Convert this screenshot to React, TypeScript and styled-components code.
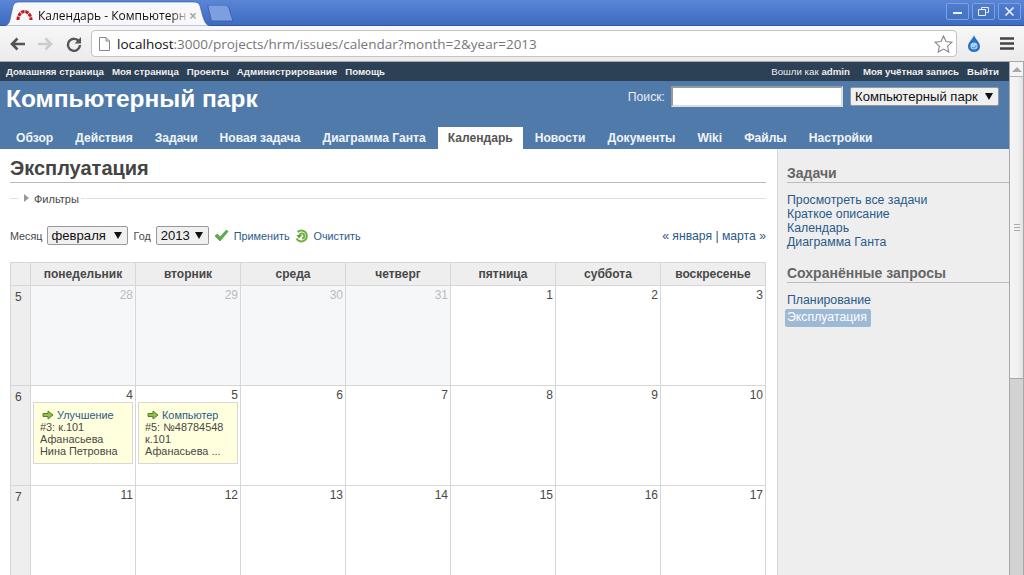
import React from 'react'
import styled, { createGlobalStyle } from 'styled-components'

const GlobalStyle = createGlobalStyle`
  html, body {
    margin: 0;
    padding: 0;
    height: 575px;
    overflow: hidden;
    background: #fff;
    font-family: "Liberation Sans", Arial, sans-serif;
  }
  * { box-sizing: border-box; }
`

const Page = styled.div`
  width: 1024px;
  height: 575px;
  display: flex;
  flex-direction: column;
  overflow: hidden;
`

/* browser chrome */
const TabStrip = styled.div`
  height: 26px;
  flex: none;
  display: flex;
  align-items: flex-end;
  justify-content: space-between;
  padding-left: 3px;
  background: linear-gradient(#5a86d6, #3d6bc0);
  border-bottom: 1px solid #2f559f;
`
const TabGroup = styled.div`
  display: flex;
  align-items: flex-end;
`
const ActiveTab = styled.div`
  position: relative;
  width: 208px;
  height: 25px;
  margin-bottom: -1px;
  display: flex;
  align-items: center;
  padding: 3px 0 0 13px;
  font: 12px "Open Sans", "Noto Sans", sans-serif;
  color: #111;
  > svg.shape {
    position: absolute;
    left: 0;
    top: 0;
  }
  > * { position: relative; }
`
const TabTitle = styled.span`
  margin-left: 5px;
  width: 148px;
  white-space: nowrap;
  -webkit-mask-image: linear-gradient(90deg, #000 90%, rgba(0, 0, 0, 0.25));
  mask-image: linear-gradient(90deg, #000 90%, rgba(0, 0, 0, 0.25));
`
const TabClose = styled.span`
  margin-left: 3px;
  color: #aaa;
  font-size: 14px;
  font-weight: bold;
`
const NewTab = styled.svg`
  margin: 0 0 3px -4px;
  display: block;
`
const WindowButtons = styled.div`
  display: flex;
  gap: 3px;
  align-self: flex-start;
  margin: 3px 3px 0 0;
`
const WindowButton = styled.div`
  width: 23px;
  height: 17px;
  border: 1px solid #7fa0dd;
  border-radius: 2px;
  background: linear-gradient(#4f7ccc, #4472c4);
  display: flex;
  align-items: center;
  justify-content: center;
`
const Toolbar = styled.div`
  height: 36px;
  flex: none;
  display: flex;
  align-items: center;
  padding-left: 10px;
  background: linear-gradient(#f7f7f7, #ebebeb);
  border-bottom: 1px solid #a8a8a8;
`
const NavIcon = styled.svg<{ $gap: number }>`
  display: block;
  flex: none;
  margin-right: ${p => p.$gap}px;
`
const Omnibox = styled.div`
  width: 866px;
  height: 27px;
  background: #fff;
  border: 1px solid #c4c4c4;
  border-radius: 4px;
  display: flex;
  align-items: center;
  padding: 0 3px 0 7px;
  font: 13.500px "Open Sans", "Noto Sans", sans-serif;
`
const UrlHost = styled.span`
  color: #111;
  margin-left: 7px;
`
const UrlRest = styled.span`
  color: #777;
  flex: 1;
`
const ToolbarIcons = styled.div`
  display: flex;
  align-items: center;
  margin-left: 11px;
  gap: 20px;
`

/* redmine header */
const TopMenu = styled.div`
  height: 19px;
  flex: none;
  background: #2c4056;
  display: flex;
  justify-content: space-between;
  align-items: center;
  padding: 0 10px 0 6px;
  font-size: 9.700px;
  font-weight: bold;
  color: #eee;
`
const TopGroup = styled.div`
  display: flex;
  gap: 8px;
`
const LoggedAs = styled.span`
  font-weight: normal;
  margin-right: 5px;
  b { font-weight: bold; }
`
const Body = styled.div`
  flex: 1;
  display: flex;
  min-height: 0;
`
const Viewport = styled.div`
  width: 1009px;
  display: flex;
  flex-direction: column;
  flex: none;
`
const Scrollbar = styled.div`
  width: 15px;
  flex: none;
  background: #d2d2d2;
  border-left: 1px solid #a8a8a8;
  border-right: 1px solid #a8a8a8;
  display: flex;
  flex-direction: column;
`
const ScrollArrow = styled.div`
  height: 15px;
  background: #f4f4f4;
  border-bottom: 1px solid #b4b4b4;
  display: flex;
  align-items: center;
  justify-content: center;
  &::before {
    content: '';
    border-left: 5px solid transparent;
    border-right: 5px solid transparent;
    border-bottom: 5px solid #aaa;
  }
`
const ScrollThumb = styled.div`
  width: 100%;
  height: 302px;
  background: linear-gradient(90deg, #f5f5f5, #f0f0f0 60%, #e2e2e2);
  border-bottom: 1px solid #a8a8a8;
  display: flex;
  flex-direction: column;
  align-items: center;
  justify-content: center;
  gap: 2px;
  i {
    display: block;
    width: 6px;
    height: 1px;
    background: #aaa;
  }
`
const Header = styled.div`
  height: 68px;
  flex: none;
  background: #507aaa;
  color: #fff;
  display: flex;
  flex-direction: column;
  justify-content: space-between;
`
const HeaderTop = styled.div`
  display: flex;
  justify-content: space-between;
  align-items: flex-start;
`
const SiteTitle = styled.h1`
  margin: 4px 0 0 6px;
  font-size: 24.500px;
  line-height: 28px;
  font-weight: bold;
`
const SearchBox = styled.div`
  display: flex;
  align-items: center;
  margin: 5px 10px 0 0;
  font-size: 12.200px;
  color: #e8eef5;
`
const SearchInput = styled.div`
  width: 172px;
  height: 21px;
  margin: 0 7px 0 6px;
  background: #fff;
  border: 2px solid #999;
  border-right-color: #ddd;
  border-bottom-color: #ddd;
`
const Select = styled.div<{ $width: number }>`
  width: ${p => p.$width}px;
  height: 19px;
  display: flex;
  align-items: center;
  justify-content: space-between;
  padding: 0 5px 0 4px;
  background: #f0f0f0;
  border: 1px solid #999;
  border-radius: 2px;
  font-size: 13.100px;
  color: #111;
  flex: none;
  &::after {
    content: '';
    border-left: 4px solid transparent;
    border-right: 4px solid transparent;
    border-top: 7px solid #111;
  }
`
const Tabs = styled.div`
  display: flex;
  padding-left: 6px;
`
const Tab = styled.div<{ $active?: boolean }>`
  height: 22px;
  line-height: 23px;
  padding: 0 10px;
  margin-right: 2px;
  font-size: 12.100px;
  font-weight: bold;
  background: ${p => (p.$active ? '#fff' : 'transparent')};
  color: ${p => (p.$active ? '#555' : '#f0f4f8')};
`
const Columns = styled.div`
  flex: 1;
  display: flex;
  min-height: 0;
`
const Content = styled.div`
  width: 778px;
  flex: none;
  padding: 9px 11px 0 10px;
  background: #fff;
  border-right: 1px solid #d5d5d5;
  overflow: hidden;
`
const PageTitle = styled.h2`
  margin: 0;
  height: 25px;
  font-size: 20px;
  line-height: 21px;
  font-weight: bold;
  color: #444;
  border-bottom: 1px solid #bbb;
`
const Fieldset = styled.div`
  display: flex;
  align-items: center;
  height: 16px;
  margin-top: 7px;
  font-size: 11px;
  color: #484848;
  &::before {
    content: '';
    width: 8px;
    height: 1px;
    background: #e0e0e0;
    margin-right: 6px;
  }
  &::after {
    content: '';
    flex: 1;
    height: 1px;
    background: #e0e0e0;
    margin-left: 2px;
  }
`
const FieldsetLabel = styled.span`
  margin-top: 1px;
`
const Triangle = styled.span`
  width: 0;
  height: 0;
  margin-right: 5px;
  border-top: 4px solid transparent;
  border-bottom: 4px solid transparent;
  border-left: 5px solid #999;
`
const FilterRow = styled.div`
  display: flex;
  align-items: center;
  margin-top: 20px;
  height: 19px;
  font-size: 10.800px;
  color: #484848;
`
const FilterLabel = styled.span<{ $before?: number }>`
  margin-left: ${p => p.$before ?? 0}px;
  margin-right: 5px;
`
const MonthLabel = styled(FilterLabel)`
  margin-right: 4px;
`
const ActionLink = styled.a`
  color: #2a5a8a;
  margin-left: 5px;
  margin-right: 4px;
`
const ActionIcon = styled.svg<{ $before: number }>`
  margin-left: ${p => p.$before}px;
  display: block;
  flex: none;
`
const MonthNav = styled.div`
  margin-left: auto;
  font-size: 12.200px;
  color: #2a5a8a;
`
const Calendar = styled.div`
  margin-top: 17px;
  display: grid;
  grid-template-columns: 20px repeat(7, 105px);
  grid-template-rows: 23px repeat(3, 100px);
  border-top: 1px solid #d7d7d7;
  border-left: 1px solid #d7d7d7;
  width: 756px;
`
const HeadCell = styled.div`
  background: #eee;
  border-right: 1px solid #d7d7d7;
  border-bottom: 1px solid #d7d7d7;
  text-align: center;
  font-size: 12px;
  line-height: 22px;
  font-weight: bold;
  color: #484848;
`
const WeekCell = styled.div`
  background: #eee;
  border-right: 1px solid #d7d7d7;
  border-bottom: 1px solid #d7d7d7;
  padding: 4px 0 0 4px;
  font-size: 12px;
  color: #484848;
`
const DayCell = styled.div<{ $other?: boolean }>`
  background: ${p => (p.$other ? '#f6f7f8' : '#fff')};
  border-right: 1px solid #d7d7d7;
  border-bottom: 1px solid #d7d7d7;
  padding: 2px 2px 0;
  font-size: 12px;
  color: #484848;
`
const DayNumber = styled.div<{ $other?: boolean }>`
  text-align: right;
  height: 14px;
  line-height: 14px;
  color: ${p => (p.$other ? '#bbb' : '#484848')};
`
const Issue = styled.div`
  width: 100px;
  height: 62px;
  padding: 6px;
  background: #ffffdd;
  border: 1px solid #d7d7d7;
  font-size: 10.900px;
  line-height: 12px;
  color: #484848;
`
const IssueTitle = styled.div`
  display: flex;
  align-items: center;
  padding-left: 2px;
  color: #2a5a8a;
  svg { margin-right: 3px; }
`
const Sidebar = styled.div`
  flex: 1;
  background: #eee;
  padding: 17px 0 0 9px;
  font-size: 12.300px;
  line-height: 14.100px;
`
const SideHeading = styled.h3<{ $spaced?: boolean }>`
  margin: ${p => (p.$spaced ? '17px' : '0')} 0 10px;
  height: 17px;
  font-size: 14px;
  line-height: 15px;
  font-weight: bold;
  color: #666;
  border-bottom: 1px solid #bbb;
`
const SideLink = styled.div`
  color: #2a5a8a;
`
const SideSelected = styled.div`
  display: inline-block;
  margin: 2px 0 0 -2px;
  padding: 1px 4px 2px 2px;
  border-radius: 2px;
  background: #9db9d5;
  color: #fff;
`

const Arrow = () => (
  <svg width="12" height="10" viewBox="0 0 12 10">
    <path d="M1 3.500h5V1l5 4-5 4V6.500H1z" fill="#8cc63f" stroke="#4f7f3a" strokeWidth="1" />
  </svg>
)

const menuLeft = ['Домашняя страница', 'Моя страница', 'Проекты', 'Администрирование', 'Помощь']
const tabs = ['Обзор', 'Действия', 'Задачи', 'Новая задача', 'Диаграмма Ганта', 'Календарь', 'Новости', 'Документы', 'Wiki', 'Файлы', 'Настройки']
const weekdays = ['понедельник', 'вторник', 'среда', 'четверг', 'пятница', 'суббота', 'воскресенье']

type IssueData = { title: string; lines: string[] }
const issues: Record<number, IssueData> = {
  4: { title: 'Улучшение', lines: ['#3: к.101', 'Афанасьева', 'Нина Петровна'] },
  5: { title: 'Компьютер', lines: ['#5: №48784548', 'к.101', 'Афанасьева ...'] },
}

const weeks = [
  { no: 5, days: [28, 29, 30, 31, 1, 2, 3] },
  { no: 6, days: [4, 5, 6, 7, 8, 9, 10] },
  { no: 7, days: [11, 12, 13, 14, 15, 16, 17] },
]

const App = () => (
  <Page>
    <GlobalStyle />
    <TabStrip>
      <TabGroup>
        <ActiveTab>
          <svg className="shape" width="208" height="25" viewBox="0 0 208 25">
            <path d="M0 25C6 25 7 20 8 14L10 5C11 2 13 1 16 1H190C194 1 196 2 197 5L200 16C202 22 204 25 208 25Z" fill="#f8f8f8" stroke="#2f559f" strokeWidth="0.6" />
          </svg>
          <svg width="17" height="12" viewBox="0 0 17 12">
            <path d="M2 11C2 6 5 2.500 8.500 2.500S15 6 15 11" fill="none" stroke="#c4161c" strokeWidth="3" strokeDasharray="3.400 0.800" />
          </svg>
          <TabTitle>Календарь - Компьютерн</TabTitle>
          <TabClose>×</TabClose>
        </ActiveTab>
        <NewTab width="28" height="17" viewBox="0 0 28 17">
          <path d="M1 0H18C20 0 21 1 22 3L26 16H6C5 16 4 15 4 14L1 2Z" fill="#7b9fdf" stroke="#3c63ad" />
        </NewTab>
      </TabGroup>
      <WindowButtons>
        <WindowButton>
          <svg width="11" height="9" viewBox="0 0 11 9"><rect x="1" y="5" width="9" height="2" fill="#eef" /></svg>
        </WindowButton>
        <WindowButton>
          <svg width="11" height="9" viewBox="0 0 11 9"><path d="M3.500 2.500V.5h7v5h-2M.5 2.500h7v6h-7z" fill="none" stroke="#eef" /></svg>
        </WindowButton>
        <WindowButton>
          <svg width="11" height="9" viewBox="0 0 11 9"><path d="M1.500 .5l8 8M9.500 .5l-8 8" stroke="#eef" strokeWidth="1.600" /></svg>
        </WindowButton>
      </WindowButtons>
    </TabStrip>
    <Toolbar>
      <NavIcon $gap={11} width="16" height="14" viewBox="0 0 16 14">
        <path d="M7.500 1.500L2 7l5.500 5.500M2.500 7H15" fill="none" stroke="#555" strokeWidth="2.600" />
      </NavIcon>
      <NavIcon $gap={13} width="16" height="14" viewBox="0 0 16 14">
        <path d="M8.500 1.500L14 7l-5.500 5.500M13.500 7H1" fill="none" stroke="#ccc" strokeWidth="2.600" />
      </NavIcon>
      <NavIcon $gap={9} width="16" height="16" viewBox="0 0 16 16">
        <path d="M13 5.500A6 6 0 1 0 14 9" fill="none" stroke="#555" strokeWidth="2.400" />
        <path d="M15 1v6.500H8.500z" fill="#555" />
      </NavIcon>
      <Omnibox>
        <svg width="11" height="14" viewBox="0 0 11 14">
          <path d="M.5.500h6.500l3.500 3.500v9.500H.5zM7 .5V4h3.500" fill="#fff" stroke="#888" />
        </svg>
        <UrlHost>localhost</UrlHost>
        <UrlRest>:3000/projects/hrm/issues/calendar?month=2&amp;year=2013</UrlRest>
        <svg width="19" height="18" viewBox="0 0 19 18">
          <path d="M9.500 1l2.500 5.500 6 .7-4.400 4 1.200 5.900-5.300-3-5.300 3 1.200-5.900-4.400-4 6-.7z" fill="#fff" stroke="#888" strokeWidth="1.100" />
        </svg>
      </Omnibox>
      <ToolbarIcons>
        <svg width="12" height="17" viewBox="0 0 12 17">
          <path d="M6 0C7 4 12 7 12 11.500A6 5.500 0 0 1 0 11.500C0 7 5 4 6 0Z" fill="#2a70c4" />
          <circle cx="6" cy="11" r="3.600" fill="#a8d4f0" />
          <path d="M4 12a2.200 2.200 0 0 0 4-1.500" fill="none" stroke="#3a86d0" strokeWidth="1" />
        </svg>
        <svg width="14" height="13" viewBox="0 0 14 13">
          <path d="M0 1.500h14M0 6.500h14M0 11.500h14" stroke="#444" strokeWidth="2.600" />
        </svg>
      </ToolbarIcons>
    </Toolbar>
    <Body>
      <Viewport>
        <TopMenu>
          <TopGroup>
            {menuLeft.map(m => <span key={m}>{m}</span>)}
          </TopGroup>
          <TopGroup>
            <LoggedAs>Вошли как <b>admin</b></LoggedAs>
            <span>Моя учётная запись</span>
            <span>Выйти</span>
          </TopGroup>
        </TopMenu>
        <Header>
          <HeaderTop>
            <SiteTitle>Компьютерный парк</SiteTitle>
            <SearchBox>
              Поиск:
              <SearchInput />
              <Select $width={149}>Компьютерный парк</Select>
            </SearchBox>
          </HeaderTop>
          <Tabs>
            {tabs.map(t => <Tab key={t} $active={t === 'Календарь'}>{t}</Tab>)}
          </Tabs>
        </Header>
        <Columns>
          <Content>
            <PageTitle>Эксплуатация</PageTitle>
            <Fieldset><Triangle /><FieldsetLabel>Фильтры</FieldsetLabel></Fieldset>
            <FilterRow>
              <MonthLabel>Месяц</MonthLabel>
              <Select $width={81}>февраля</Select>
              <FilterLabel $before={6}>Год</FilterLabel>
              <Select $width={53}>2013</Select>
              <ActionIcon $before={5} width="15" height="13" viewBox="0 0 15 13">
                <path d="M1 7l2.500-2 2.500 3L12.500 1 14 2.500 6 12z" fill="#5cb048" stroke="#3d8a35" strokeWidth="0.600" />
              </ActionIcon>
              <ActionLink>Применить</ActionLink>
              <ActionIcon $before={0} width="15" height="14" viewBox="0 0 14 14">
                <path d="M2 9.500A5.500 5.500 0 1 0 3 3M7.500 9.500A2.500 2.500 0 1 0 5 6" fill="none" stroke="#6fb03f" strokeWidth="2" />
                <path d="M2 6h5.500L4.500 9.500z" fill="#5b9e34" />
              </ActionIcon>
              <ActionLink>Очистить</ActionLink>
              <MonthNav>« января | марта »</MonthNav>
            </FilterRow>
            <Calendar>
              <HeadCell />
              {weekdays.map(d => <HeadCell key={d}>{d}</HeadCell>)}
              {weeks.map(w => (
                <React.Fragment key={w.no}>
                  <WeekCell>{w.no}</WeekCell>
                  {w.days.map(d => {
                    const other = d > 20 && w.no === 5
                    const issue = issues[d]
                    return (
                      <DayCell key={d} $other={other}>
                        <DayNumber $other={other}>{d}</DayNumber>
                        {issue ? (
                          <Issue>
                            <IssueTitle><Arrow />{issue.title}</IssueTitle>
                            {issue.lines.map(l => <div key={l}>{l}</div>)}
                          </Issue>
                        ) : null}
                      </DayCell>
                    )
                  })}
                </React.Fragment>
              ))}
            </Calendar>
          </Content>
          <Sidebar>
            <SideHeading>Задачи</SideHeading>
            <SideLink>Просмотреть все задачи</SideLink>
            <SideLink>Краткое описание</SideLink>
            <SideLink>Календарь</SideLink>
            <SideLink>Диаграмма Ганта</SideLink>
            <SideHeading $spaced>Сохранённые запросы</SideHeading>
            <SideLink>Планирование</SideLink>
            <SideSelected>Эксплуатация</SideSelected>
          </Sidebar>
        </Columns>
      </Viewport>
      <Scrollbar>
        <ScrollArrow />
        <ScrollThumb><i /><i /><i /></ScrollThumb>
      </Scrollbar>
    </Body>
  </Page>
)

export default App
